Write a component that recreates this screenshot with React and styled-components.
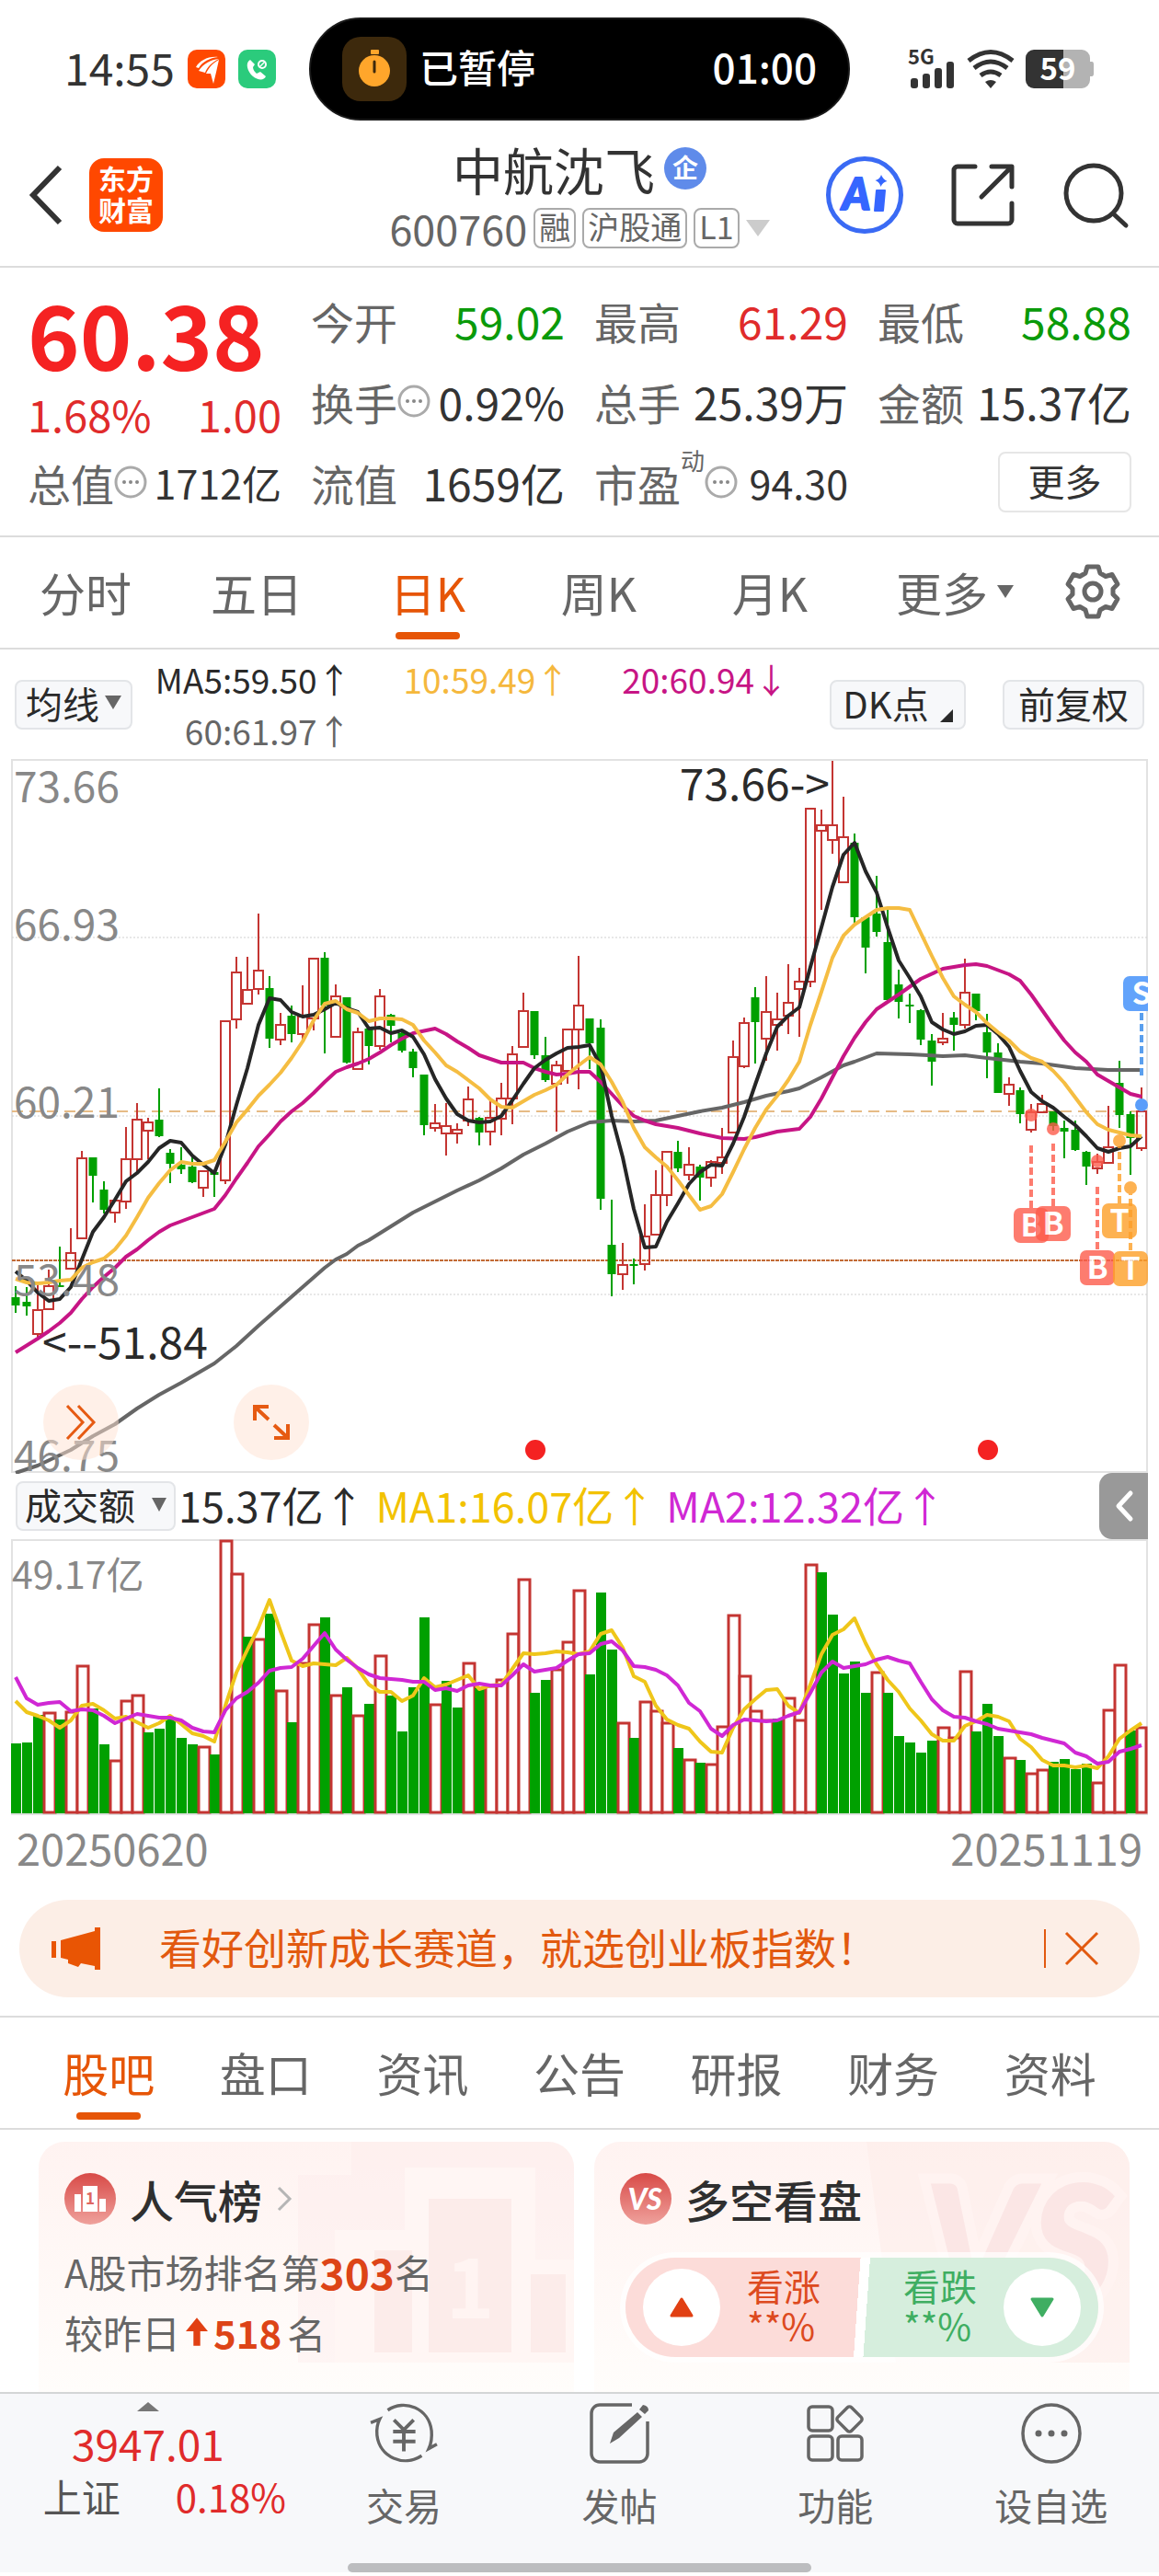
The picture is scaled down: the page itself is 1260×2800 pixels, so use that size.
import React from "react";
import styled, { createGlobalStyle } from "styled-components";

const GlobalStyle = createGlobalStyle`
  * {
    box-sizing: border-box;
  }

  body {
    margin: 0;
    background: #ffffff;
    color: #333333;
    font-family: "Noto Sans CJK SC", sans-serif;
    line-height: 1;
  }

  button {
    margin: 0;
    padding: 0;
    border: none;
    background: none;
    color: inherit;
    font: inherit;
    cursor: pointer;
  }

  a {
    color: inherit;
    text-decoration: none;
  }

  svg {
    display: block;
    flex-shrink: 0;
    overflow: visible;
  }
`;

/* ---------- status bar ---------- */

const StatusBar = styled.div`
  display: grid;
  grid-template-columns: 1fr auto 1fr;
  align-items: center;
  height: 150px;
  padding: 0 70px;
`;

const StatusLeft = styled.div`
  display: flex;
  align-items: center;
  gap: 14px;
`;

const Clock = styled.span`
  padding-bottom: 6px;
  font-size: 48px;
`;

const StatusRight = styled.div`
  display: flex;
  align-items: center;
  justify-content: flex-end;
  gap: 12px;
`;

const Island = styled.div`
  display: flex;
  align-items: center;
  width: 588px;
  height: 112px;
  padding: 0 34px;
  border: 2px solid #1a1a1a;
  border-radius: 56px;
  background: #000000;
  color: #ffffff;
  font-size: 42px;
  font-weight: 500;
`;

const IslandLabel = styled.span`
  flex: 1;
  margin-left: 14px;
  padding-bottom: 6px;
`;

const IslandTime = styled.span`
  padding-bottom: 6px;
  font-size: 44px;
`;

/* ---------- header ---------- */

const Header = styled.header`
  display: grid;
  grid-template-columns: 1fr auto 1fr;
  align-items: center;
  height: 141px;
  padding: 0 32px 16px;
  border-bottom: 2px solid #dcdcdc;
`;

const HeaderSide = styled.div`
  display: flex;
  align-items: center;
  justify-content: ${(props) => (props.$end ? "flex-end" : "flex-start")};
  gap: ${(props) => (props.$end ? "52px" : "28px")};
`;

const AppBadge = styled.a`
  display: flex;
  align-items: center;
  justify-content: center;
  width: 80px;
  height: 80px;
  padding-bottom: 4px;
  border-radius: 16px;
  background: #ff4800;
  color: #ffffff;
  font-size: 30px;
  font-weight: 700;
  line-height: 34px;
  text-align: center;
`;

const TitleBlock = styled.div`
  display: flex;
  flex-direction: column;
  align-items: center;
  gap: 12px;
`;

const StockName = styled.h1`
  display: flex;
  align-items: center;
  gap: 10px;
  margin: 0;
  font-size: 55px;
  font-weight: 400;
  line-height: 60px;
`;

const CompanyMark = styled.span`
  display: flex;
  align-items: center;
  justify-content: center;
  width: 46px;
  height: 46px;
  padding-bottom: 4px;
  border-radius: 50%;
  background: #5f8bea;
  color: #ffffff;
  font-size: 28px;
  font-weight: 700;
`;

const CodeRow = styled.div`
  display: flex;
  align-items: center;
  gap: 7px;
  color: #666666;
  font-size: 45px;
`;

const Tag = styled.span`
  height: 44px;
  padding: 0 4px;
  border: 2px solid #aaaaaa;
  border-radius: 8px;
  font-size: 34px;
  line-height: 36px;
`;

const Caret = styled.span`
  width: 0;
  height: 0;
  border-left: ${(props) => props.$size}px solid transparent;
  border-right: ${(props) => props.$size}px solid transparent;
  border-top: ${(props) => props.$drop}px solid ${(props) => props.$color || "#666666"};
`;

/* ---------- quote ---------- */

const Quote = styled.section`
  display: grid;
  grid-template-columns: repeat(4, 1fr);
  grid-auto-rows: 88px;
  column-gap: 32px;
  padding: 13px 30px 14px;
  border-bottom: 2px solid #dcdcdc;
`;

const PriceBlock = styled.div`
  grid-row: span 2;
  display: flex;
  flex-direction: column;
  color: #f52222;
`;

const Price = styled.strong`
  font-size: 96px;
  font-weight: 700;
  line-height: 116px;
  white-space: nowrap;
`;

const ChangeRow = styled.div`
  display: flex;
  justify-content: space-between;
  color: #e02b2b;
  font-size: 47px;
  line-height: 60px;
`;

const Cell = styled.div`
  display: flex;
  align-items: center;
  justify-content: space-between;
  white-space: nowrap;
`;

const CellLabel = styled.span`
  display: flex;
  align-items: center;
  color: #666666;
  font-size: 47px;
`;

const CellSup = styled.sup`
  align-self: flex-start;
  margin-top: -14px;
  font-size: 26px;
  line-height: 26px;
`;

const tones = { up: "#e02b2b", down: "#0a9a0a", flat: "#333333" };

const CellValue = styled.span`
  color: ${(props) => tones[props.$tone || "flat"]};
  font-size: ${(props) => (props.$tight ? 43 : 48)}px;
`;

const MoreCell = styled.div`
  display: flex;
  align-items: center;
  justify-content: flex-end;
`;

const MoreButton = styled.button`
  width: 145px;
  height: 66px;
  padding-bottom: 4px;
  border: 2px solid #e6e6e6;
  border-radius: 8px;
  font-size: 40px;
`;

/* ---------- tabs ---------- */

const PeriodTabs = styled.nav`
  display: grid;
  grid-template-columns: repeat(5, 186fr) 216fr 84fr;
  height: 122px;
  padding-right: 30px;
  border-bottom: 2px solid #dcdcdc;
`;

const InfoTabs = styled.nav`
  display: grid;
  grid-template-columns: repeat(7, 1fr);
  height: 124px;
  padding: 0 33px;
  border-top: 2px solid #dcdcdc;
  border-bottom: 2px solid #dcdcdc;
`;

const Tab = styled.button`
  position: relative;
  display: flex;
  align-items: center;
  justify-content: center;
  gap: 10px;
  padding-bottom: 2px;
  color: ${(props) => (props.$active ? "#e65507" : "#666666")};
  font-size: 50px;

  &::after {
    content: "";
    position: absolute;
    bottom: 9px;
    left: 50%;
    width: 70px;
    height: 8px;
    margin-left: -35px;
    border-radius: 4px;
    background: ${(props) => (props.$active ? "#e65507" : "transparent")};
  }
`;

/* ---------- chart bars ---------- */

const AverageBar = styled.div`
  display: flex;
  align-items: center;
  height: 119px;
  padding: 0 16px;
`;

const PillButton = styled.button`
  display: flex;
  align-items: center;
  justify-content: center;
  gap: ${(props) => props.$gap || 6}px;
  width: ${(props) => props.$width}px;
  height: 54px;
  padding-bottom: 4px;
  border: 2px solid #e3e5e8;
  border-radius: 8px;
  background: #f7f8fa;
  color: #2a2a2a;
  font-size: 40px;
  white-space: nowrap;
`;

const CornerMark = styled.span`
  align-self: flex-end;
  width: 0;
  height: 0;
  margin-bottom: 2px;
  border-left: 14px solid transparent;
  border-bottom: 14px solid #2a2a2a;
`;

const AverageList = styled.div`
  flex: 1;
  display: grid;
  grid-template-columns: repeat(3, 1fr);
  margin-right: 45px;
  font-size: 37px;
  line-height: 56px;
  text-align: right;
  white-space: nowrap;
`;

const Average = styled.span`
  color: ${(props) => props.$color};
`;

const ButtonGroup = styled.div`
  display: flex;
  gap: 40px;
`;

const ChartArea = styled.section`
  position: relative;
`;

const ChartSvg = styled.svg`
  width: 100%;
  height: auto;
`;

const RoundButton = styled.button`
  position: absolute;
  bottom: 14px;
  left: ${(props) => props.$left}px;
  display: flex;
  align-items: center;
  justify-content: center;
  width: 82px;
  height: 82px;
  border-radius: 50%;
  background: rgba(255, 226, 209, 0.5);
`;

const VolumeBar = styled.div`
  display: flex;
  align-items: center;
  height: 72px;
  padding: 0 12px 0 17px;
  font-size: 45px;
  white-space: nowrap;
`;

const VolumeValue = styled.span`
  margin-left: ${(props) => props.$gap}px;
  padding-bottom: 4px;
  color: ${(props) => props.$color};
`;

const CollapseButton = styled.button`
  display: flex;
  align-items: center;
  justify-content: center;
  width: 53px;
  height: 72px;
  margin-left: auto;
  border-radius: 14px 0 0 14px;
  background: #999999;
`;

const DateRow = styled.div`
  display: flex;
  justify-content: space-between;
  padding: 12px 18px 34px;
  color: #888888;
  font-size: 47px;
  line-height: 46px;
`;

/* ---------- banner ---------- */

const Banner = styled.aside`
  display: flex;
  align-items: center;
  height: 106px;
  margin: 0 21px 20px;
  padding: 0 44px 0 34px;
  border-radius: 53px;
  background: #fceee6;
  color: #e2590f;
  font-size: 46px;
`;

const BannerText = styled.a`
  flex: 1;
  margin-left: 62px;
  padding-bottom: 6px;
  white-space: nowrap;
`;

const BannerClose = styled.button`
  display: flex;
  align-items: center;
  height: 42px;
  padding-left: 20px;
  border-left: 2px solid #e2590f;
`;

/* ---------- cards ---------- */

const Cards = styled.section`
  display: grid;
  grid-template-columns: 1fr 1fr;
  gap: 22px;
  padding: 13px 32px 0 42px;
`;

const Card = styled.article`
  position: relative;
  height: 272px;
  padding: 34px 28px 0;
  border-radius: 28px 28px 0 0;
  background: linear-gradient(#fff3f1, #fffdfb);
  overflow: hidden;
`;

const CardArt = styled.svg`
  position: absolute;
  top: 0;
  right: 0;
`;

const CardBody = styled.div`
  position: relative;
`;

const CardTitle = styled.h2`
  display: flex;
  align-items: center;
  gap: 15px;
  margin: 0 0 18px;
  color: #2f2f2f;
  font-size: 48px;
  font-weight: 500;
  line-height: 56px;
`;

const CardLine = styled.p`
  display: flex;
  align-items: center;
  gap: ${(props) => props.$gap || 0}px;
  margin: 0;
  color: #666666;
  font-size: 42px;
  line-height: 66px;
`;

const Rank = styled.strong`
  color: #dd4417;
  font-size: ${(props) => (props.$large ? 46 : 42)}px;
  font-weight: 700;
`;

const VotePill = styled.div`
  display: flex;
  justify-content: space-between;
  height: 108px;
  margin: 36px 6px 0;
  padding: 0 19px;
  border-radius: 54px;
  background: linear-gradient(94deg, #fcdcd9 49%, #ffffff 49%, #ffffff 51%, #d6eedd 51%);
  box-shadow: 0 0 0 6px rgba(255, 255, 255, 0.7);
`;

const Vote = styled.button`
  display: flex;
  align-items: center;
  gap: 29px;
  color: ${(props) => props.$color};
  font-size: 40px;
  line-height: 43px;
  text-align: left;
`;

const VoteText = styled.span`
  padding-bottom: 4px;
`;

const VoteDisc = styled.span`
  display: flex;
  align-items: center;
  justify-content: center;
  width: 84px;
  height: 84px;
  border-radius: 50%;
  background: #ffffff;
`;

/* ---------- bottom bar ---------- */

const Footer = styled.footer`
  border-top: 2px solid #d4d6d6;
  background: #f7f8fa;
`;

const FooterNav = styled.nav`
  display: grid;
  grid-template-columns: 321fr repeat(4, 234fr);
  height: 184px;
`;

const IndexButton = styled.button`
  display: flex;
  flex-direction: column;
  align-items: center;
  padding-top: 9px;
  color: #e02b2b;
  font-size: 46px;
`;

const IndexValue = styled.span`
  margin-top: 4px;
  line-height: 60px;
`;

const IndexRow = styled.span`
  display: flex;
  gap: 60px;
  padding-left: 36px;
  font-size: 42px;
  line-height: 56px;
`;

const IndexName = styled.span`
  color: #555555;
`;

const FooterItem = styled.button`
  display: flex;
  flex-direction: column;
  align-items: center;
  padding-top: 9px;
  color: #666666;
  font-size: 41px;
  white-space: nowrap;
`;

const FooterIcon = styled.span`
  display: flex;
  align-items: center;
  height: 68px;
  margin-bottom: 23px;
`;

const HomeIndicator = styled.div`
  width: 504px;
  height: 10px;
  margin: 0 auto 4px;
  border-radius: 5px;
  background: #bcbdbf;
`;

/* ---------- chart data ---------- */

const x = (i) => 17 + i * 12;

// [body colour, high, body top, body bottom, low, volume colour, volume top]
const days = [
  ["g", 1397, 1409, 1418, 1426, "g", 1895], ["g", 1398, 1414, 1419, 1429, "g", 1894],
  ["r", 1395, 1423, 1449, 1453, "g", 1864], ["r", 1379, 1397, 1422, 1422, "r", 1861],
  ["g", 1354, 1396, 1398, 1398, "g", 1869], ["r", 1334, 1361, 1378, 1379, "r", 1860],
  ["r", 1250, 1258, 1345, 1345, "r", 1810], ["g", 1257, 1257, 1277, 1306, "g", 1857],
  ["g", 1283, 1292, 1314, 1318, "g", 1896], ["r", 1302, 1304, 1317, 1328, "r", 1913],
  ["r", 1224, 1259, 1305, 1313, "r", 1848], ["r", 1198, 1216, 1259, 1273, "r", 1842],
  ["r", 1214, 1219, 1228, 1259, "g", 1883], ["g", 1182, 1216, 1234, 1235, "g", 1879],
  ["g", 1248, 1252, 1264, 1285, "g", 1869], ["g", 1246, 1265, 1270, 1275, "g", 1889],
  ["g", 1255, 1267, 1284, 1285, "g", 1896], ["r", 1271, 1272, 1290, 1300, "r", 1898],
  ["g", 1272, 1273, 1276, 1300, "g", 1907], ["r", 1109, 1109, 1282, 1286, "r", 1674],
  ["r", 1039, 1056, 1107, 1117, "r", 1710], ["r", 1039, 1075, 1090, 1090, "g", 1779],
  ["r", 992, 1054, 1074, 1080, "r", 1781], ["g", 1060, 1073, 1128, 1138, "g", 1754],
  ["r", 1100, 1113, 1129, 1135, "r", 1837], ["g", 1092, 1103, 1123, 1132, "g", 1872],
  ["r", 1070, 1104, 1123, 1130, "r", 1807], ["r", 1041, 1041, 1106, 1119, "r", 1765],
  ["g", 1034, 1040, 1092, 1144, "g", 1758], ["r", 1069, 1082, 1126, 1126, "r", 1842],
  ["g", 1083, 1083, 1154, 1155, "g", 1834], ["r", 1116, 1121, 1161, 1161, "r", 1864],
  ["g", 1115, 1117, 1136, 1156, "g", 1852], ["r", 1074, 1082, 1136, 1140, "r", 1799],
  ["g", 1101, 1102, 1114, 1132, "g", 1843], ["g", 1121, 1122, 1141, 1143, "g", 1882],
  ["g", 1139, 1142, 1160, 1170, "g", 1834], ["g", 1167, 1167, 1222, 1233, "g", 1758],
  ["r", 1199, 1220, 1225, 1229, "r", 1852], ["r", 1198, 1223, 1231, 1255, "g", 1827],
  ["r", 1220, 1227, 1231, 1242, "g", 1856], ["r", 1180, 1194, 1217, 1223, "r", 1807],
  ["g", 1213, 1214, 1230, 1244, "g", 1835], ["r", 1195, 1214, 1229, 1244, "r", 1832],
  ["r", 1176, 1193, 1215, 1233, "r", 1825], ["r", 1136, 1145, 1193, 1221, "r", 1775],
  ["r", 1078, 1098, 1137, 1137, "r", 1716], ["g", 1098, 1098, 1146, 1150, "g", 1840],
  ["g", 1126, 1146, 1173, 1175, "g", 1826], ["r", 1152, 1157, 1177, 1229, "r", 1814],
  ["r", 1118, 1118, 1163, 1177, "r", 1784], ["r", 1038, 1092, 1118, 1183, "r", 1728],
  ["g", 1106, 1106, 1133, 1161, "g", 1820], ["g", 1107, 1116, 1302, 1314, "g", 1731],
  ["g", 1303, 1352, 1384, 1408, "g", 1793], ["r", 1350, 1374, 1384, 1401, "r", 1872],
  ["g", 1367, 1373, 1375, 1395, "g", 1889], ["r", 1308, 1343, 1373, 1380, "r", 1849],
  ["r", 1271, 1298, 1341, 1341, "r", 1859], ["r", 1251, 1251, 1298, 1310, "r", 1872],
  ["g", 1239, 1251, 1269, 1273, "g", 1900], ["r", 1246, 1265, 1276, 1282, "r", 1912],
  ["g", 1265, 1267, 1279, 1304, "g", 1916], ["r", 1260, 1262, 1279, 1289, "r", 1917],
  ["r", 1225, 1257, 1263, 1275, "r", 1876], ["r", 1130, 1148, 1230, 1230, "r", 1755],
  ["r", 1105, 1111, 1158, 1160, "r", 1821], ["g", 1072, 1083, 1110, 1155, "r", 1859],
  ["r", 1060, 1099, 1128, 1152, "r", 1869], ["r", 1078, 1107, 1113, 1141, "g", 1868],
  ["r", 1047, 1089, 1103, 1123, "r", 1845], ["r", 1051, 1066, 1074, 1126, "r", 1869],
  ["r", 878, 878, 1066, 1072, "r", 1700], ["r", 879, 896, 902, 988, "g", 1709],
  ["r", 826, 896, 912, 927, "g", 1755], ["r", 865, 909, 958, 958, "g", 1819],
  ["g", 905, 915, 996, 1002, "g", 1806], ["g", 996, 996, 1029, 1057, "g", 1840],
  ["g", 951, 992, 1012, 1017, "r", 1817], ["g", 988, 1023, 1086, 1088, "g", 1840],
  ["g", 1053, 1069, 1088, 1106, "g", 1887], ["g", 1079, 1091, 1093, 1111, "g", 1894],
  ["g", 1096, 1097, 1129, 1135, "g", 1905], ["g", 1123, 1130, 1153, 1179, "g", 1892],
  ["r", 1100, 1128, 1132, 1135, "r", 1877], ["g", 1099, 1105, 1113, 1141, "r", 1888],
  ["r", 1041, 1078, 1113, 1117, "r", 1816], ["g", 1079, 1079, 1098, 1108, "g", 1882],
  ["g", 1101, 1121, 1143, 1171, "g", 1852], ["g", 1133, 1143, 1187, 1187, "g", 1887],
  ["r", 1170, 1178, 1188, 1201, "r", 1910], ["g", 1181, 1184, 1210, 1220, "g", 1913],
  ["r", 1199, 1208, 1227, 1230, "r", 1927], ["r", 1189, 1199, 1208, 1208, "r", 1923],
  ["g", 1207, 1207, 1223, 1228, "g", 1915], ["g", 1217, 1225, 1229, 1258, "g", 1912],
  ["g", 1217, 1227, 1249, 1250, "g", 1923], ["g", 1250, 1251, 1267, 1287, "g", 1917],
  ["r", 1253, 1262, 1269, 1275, "r", 1937], ["r", 1201, 1246, 1263, 1263, "r", 1858],
  ["g", 1152, 1176, 1211, 1225, "r", 1809], ["g", 1207, 1210, 1236, 1276, "g", 1881],
  ["r", 1181, 1207, 1247, 1250, "r", 1877],
];

// a missing day is joined by the straight line between its neighbours
const ma5 = [
  1381, 1391, 1404, 1413, 1411, 1398, 1368, 1338, 1322, 1303, 1283, 1274, 1262, 1247, 1239, 1241, 1255, 1265,
  1274, 1243, 1200, 1160, 1113, 1084, 1086, 1099, 1104, 1102, 1096, 1089, 1095, 1099, 1117, 1116, 1122, 1119,
  1126, 1145, 1172, 1193, 1210, 1217, 1219, 1218, 1212, 1195, 1177, 1160, 1151, 1144, 1138, 1137, 1135, 1157,
  1212, 1257, 1313, 1355, 1354, 1327, 1307, 1286, 1273, 1265, 1266, 1242, 1213, 1178, 1144, 1115, 1103, 1094,
  1050, 1007, 963, 928, 915, 946, 969, 1007, 1043, 1062, 1082, 1110, 1118, 1123, 1120, 1114, 1113, 1123, 1137,
  1163, 1186, 1196, 1203, 1213, 1222, 1234, 1247, 1251, 1247, 1245, 1234,
];

const ma10 = [
  1389, 1393, 1394, 1393, 1391, 1390, 1377, 1371, 1367, 1357, 1342, 1322, 1301, 1285, 1271, 1262, 1264, 1264,
  1260, 1240, 1219, 1205, 1190, 1178, 1165, 1149, 1131, 1108, 1090, 1087, 1096, 1100, 1109, 1106, 1106, 1107,
  1113, 1130, 1143, 1157, 1164, 1173, 1182, 1194, 1202, 1203, 1196, 1189, 1184, 1178, 1167, 1157, 1148, 1156,
  1175, 1197, 1225, 1246, 1257, 1267, 1282, 1298, 1314, 1310, 1297, 1273, 1248, 1225, 1205, 1190, 1173, 1153,
  1113, 1077, 1040, 1016, 1004, 996, 988, 986, 986, 988, 1013, 1038, 1062, 1082, 1091, 1099, 1111, 1121, 1130,
  1142, 1149, 1153, 1163, 1176, 1192, 1208, 1221, 1227, 1230, 1233, 1234,
];

const ma20 = [
  1469, , 1454, 1446, 1437, 1426, 1411, 1398, 1387, 1377, 1365, 1357, 1347, 1338, 1331, , 1322, , 1313, 1298,
  1280, 1263, 1245, 1232, 1218, 1207, 1198, 1187, 1175, 1164, 1159, 1155, 1150, 1143, 1135, 1128, 1122, , 1117,
  1123, 1131, 1138, 1146, , 1154, , 1154, 1160, 1164, 1167, 1166, 1164, 1164, 1175, 1188, 1201, 1212, 1217,
  1221, , 1225, , 1231, , 1236, , 1237, 1235, , 1229, , 1226, 1213, 1193, 1170, 1147, 1127, 1110, 1096, , 1080,
  , 1063, , 1052, , 1048, 1047, 1049, , 1058, 1065, 1080, 1097, 1114, 1130, 1143, 1153, 1167, 1174, 1181, 1188,
  1191,
];

const ma60 = [
  1600, , 1592, , , 1575, , 1560, , 1547, , 1530, , 1515, , 1502, , , 1481, , 1462, , 1440, , 1419, , 1398, ,
  1377, 1368, 1362, 1353, 1347, , 1332, , 1317, , 1305, , 1293, , 1282, , 1269, , 1254, , 1242, , 1229, , 1219, ,
  1217, , 1218, , 1217, , 1212, , 1207, , 1203, , 1197, , 1190, , 1185, 1182, , 1170, , 1157, 1153, , 1144, , ,
  1145, , , 1147, , 1146, , 1149, , , 1153, , 1155, , , 1160, , , 1162, , , 1162,
];

const volMa1 = [
  1848, 1860, 1864, 1869, 1877, 1869, 1853, 1851, 1858, 1867, 1865, 1871, 1877, 1872, 1864, 1873, 1883, 1886,
  1892, 1853, 1817, 1792, 1768, 1738, 1772, 1804, 1810, 1807, 1808, 1809, 1801, 1813, 1830, 1838, 1838, 1848,
  1842, 1823, 1833, 1830, 1825, 1820, 1835, 1831, 1830, 1813, 1796, 1797, 1796, 1794, 1795, 1797, 1794, 1775,
  1771, 1790, 1821, 1827, 1853, 1868, 1874, 1878, 1892, 1903, 1904, 1877, 1857, 1846, 1836, 1835, 1853, 1861,
  1830, 1797, 1776, 1770, 1758, 1785, 1808, 1825, 1838, 1856, 1869, 1884, 1891, 1891, 1875, 1870, 1863, 1865,
  1870, 1889, 1898, 1912, 1918, 1918, 1920, 1918, 1921, 1908, 1889, 1880, 1872,
];

const volMa2 = [
  1822, 1845, 1852, 1850, 1849, 1859, 1857, 1858, 1864, 1872, 1867, 1862, 1864, 1866, 1866, 1869, 1877, 1881,
  1882, 1858, 1845, 1838, 1828, 1815, 1812, 1811, 1802, 1788, 1774, 1792, 1803, 1812, 1819, 1823, , 1825, 1827,
  1827, 1836, 1834, 1837, 1831, 1829, 1831, 1831, 1820, 1808, 1816, , 1812, 1804, 1797, 1796, 1786, 1783, 1793,
  1810, 1811, 1814, 1820, 1831, 1850, 1859, 1878, 1886, 1874, 1868, , 1870, 1869, 1864, 1860, 1839, 1817, 1805,
  1812, 1810, 1808, 1803, 1800, 1804, 1807, 1827, 1846, 1858, 1865, 1866, 1870, 1873, 1878, , 1882, 1884, 1888,
  , 1894, 1904, 1908, 1916, 1914, 1903, 1900, 1896,
];

const trades = [
  { day: 92, dot: 1211, from: 1244, top: 1312, label: "B", color: "#fd5c4c" },
  { day: 94, dot: 1226, from: 1242, top: 1310, label: "B", color: "#fd5c4c" },
  { day: 98, dot: 1261, from: 1289, top: 1358, label: "B", color: "#fd5c4c" },
  { day: 100, dot: 1239, from: 1239, top: 1307, label: "T", color: "#fd9f28" },
  { day: 101, dot: 1290, from: 1290, top: 1359, label: "T", color: "#fd9f28" },
];

const UP = "#c43532";
const DOWN = "#00a000";

function Line({ values, color, width = 4 }) {
  const points = [];
  values.forEach((y, i) => points.push(`${x(i)},${y}`));
  return <polyline points={points.join(" ")} fill="none" stroke={color} strokeWidth={width} strokeLinejoin="round" />;
}

function Candle({ day, i }) {
  const [kind, high, top, bottom, low] = day;
  const cx = x(i);
  if (kind === "g") {
    return (
      <g fill={DOWN}>
        <rect x={cx - 1} y={high} width="2" height={low - high} />
        <rect x={cx - 4.5} y={top} width="9" height={Math.max(bottom - top, 2)} />
      </g>
    );
  }
  return (
    <g stroke={UP} strokeWidth="2" fill="none">
      <path d={`M${cx} ${high}V${top}M${cx} ${bottom}V${low}`} />
      <rect x={cx - 5} y={top} width="10" height={Math.max(bottom - top, 2)} />
    </g>
  );
}

function TradeMark({ mark }) {
  const cx = x(mark.day);
  return (
    <g opacity="0.8">
      <circle cx={cx} cy={mark.dot} r="7" fill={mark.color} />
      <path d={`M${cx} ${mark.from}V${mark.top}`} stroke={mark.color} strokeWidth="4" strokeDasharray="8 4" />
      <rect x={cx - 19} y={mark.top} width="38" height="38" rx="7" fill={mark.color} />
      <text x={cx} y={mark.top + 31} fontSize="34" fontWeight="700" fill="#ffffff" textAnchor="middle">
        {mark.label}
      </text>
    </g>
  );
}

function PriceChart() {
  return (
    <ChartSvg viewBox="0 824 1260 776" role="img" aria-label="日K">
      <defs>
        <clipPath id="plot">
          <rect x="12" y="824" width="1236" height="777" />
        </clipPath>
      </defs>
      <rect x="13" y="825" width="1234" height="774" fill="none" stroke="#e2e2e2" strokeWidth="2" />
      <path d="M13 1018H1247M13 1212H1247M13 1406H1247" stroke="#d0d0d0" strokeWidth="1" strokeDasharray="2 2" />
      <path d="M13 1207H1247" stroke="#e6bb85" strokeWidth="2" strokeDasharray="12 7" />
      <path d="M13 1369H1247" stroke="#c26a35" strokeWidth="2" strokeDasharray="4 1" />
      {days.map((day, i) => (
        <Candle key={i} day={day} i={i} />
      ))}
      <g clipPath="url(#plot)">
        <Line values={ma60} color="#666666" />
        <Line values={ma20} color="#c71585" />
        <Line values={ma5} color="#262626" />
        <Line values={ma10} color="#f5bd42" />
        {trades.map((mark) => (
          <TradeMark key={mark.day} mark={mark} />
        ))}
        <circle cx="1241" cy="1200" r="7" fill="#5a9dfa" />
        <path d="M1241 1100V1168" stroke="#5a9fee" strokeWidth="4" strokeDasharray="8 4" />
        <rect x="1221" y="1060" width="39" height="38" rx="7" fill="#62a3fb" />
        <text x="1241" y="1091" fontSize="34" fontWeight="700" fill="#ffffff" textAnchor="middle">
          S
        </text>
      </g>
      <circle cx="582" cy="1575" r="11" fill="#f42222" />
      <circle cx="1074" cy="1575" r="11" fill="#f42222" />
      <g fontSize="46" fill="#888888">
        <text x="15" y="871">73.66</text>
        <text x="15" y="1021">66.93</text>
        <text x="15" y="1214">60.21</text>
        <text x="15" y="1407">53.48</text>
        <text x="15" y="1598">46.75</text>
      </g>
      <g fontSize="48" fill="#2a2a2a">
        <text x="902" y="869" textAnchor="end">73.66-&gt;</text>
        <text x="46" y="1476">&lt;--51.84</text>
      </g>
    </ChartSvg>
  );
}

function VolumeChart() {
  return (
    <ChartSvg viewBox="0 1672 1260 300" role="img" aria-label="成交额">
      <rect x="13" y="1673" width="1234" height="298" fill="none" stroke="#e2e2e2" strokeWidth="2" />
      {days.map((day, i) =>
        day[5] === "g" ? (
          <rect key={i} x={x(i) - 5} y={day[6] - 1} width="11" height={1971 - day[6]} fill={DOWN} />
        ) : (
          <rect
            key={i}
            x={x(i) - 5}
            y={day[6]}
            width={i === days.length - 1 ? 10 : 12}
            height={1969 - day[6]}
            fill="#ffffff"
            stroke={UP}
            strokeWidth="3"
          />
        )
      )}
      <Line values={volMa1} color="#efc61a" />
      <Line values={volMa2} color="#d028d4" />
      <text x="13" y="1726" fontSize="41" fill="#888888">
        49.17亿
      </text>
    </ChartSvg>
  );
}

/* ---------- icons ---------- */

const InfoIcon = () => (
  <svg width="36" height="36" viewBox="0 0 36 36">
    <circle cx="18" cy="18" r="16" fill="none" stroke="#aaaaaa" strokeWidth="3" />
    <g fill="#888888">
      <circle cx="11" cy="18" r="2" />
      <circle cx="18" cy="18" r="2" />
      <circle cx="25" cy="18" r="2" />
    </g>
  </svg>
);

const BackIcon = () => (
  <svg width="37" height="66" viewBox="0 0 37 66">
    <path d="M33 3L4 33l29 30" fill="none" stroke="#333333" strokeWidth="6" />
  </svg>
);

const AiIcon = () => (
  <svg width="84" height="84" viewBox="0 0 84 84">
    <circle cx="42" cy="42" r="39.5" fill="none" stroke="#3a6af4" strokeWidth="5" />
    <text
      x="33"
      y="58"
      fontFamily="Lato, sans-serif"
      fontSize="47"
      fontWeight="900"
      fontStyle="italic"
      fill="#3566ff"
      stroke="#3566ff"
      strokeWidth="2"
      strokeLinejoin="round"
      textAnchor="middle"
    >
      A
    </text>
    <path d="M55 37h9l-2 22h-9z" fill="#3566ff" stroke="#3566ff" strokeWidth="2" strokeLinejoin="round" />
    <path d="M60 20q2 5 6.500 7q-5 1-7 6q-1-5-6-7q5-1 6.500-6z" fill="#3566ff" />
  </svg>
);

const ShareIcon = () => (
  <svg width="70" height="70" viewBox="0 0 70 70" fill="none" stroke="#333333" strokeWidth="5" strokeLinecap="round" strokeLinejoin="round">
    <path d="M26 4H7a4 4 0 0 0-4 4v54a4 4 0 0 0 4 4h55a4 4 0 0 0 4-4V44" />
    <path d="M44 4h22v22M65 5L33 37" />
  </svg>
);

const SearchIcon = () => (
  <svg width="72" height="72" viewBox="0 0 72 72" fill="none" stroke="#333333" strokeWidth="5" strokeLinecap="round">
    <circle cx="33" cy="34" r="30" />
    <path d="M54 56l14 13" />
  </svg>
);

const GearIcon = () => (
  <svg width="62" height="62" viewBox="0 0 62 62" fill="none" stroke="#666666" strokeWidth="5" strokeLinejoin="round">
    <path d="M25 4h12l2 7 6 3.500 7-2 6 10.500-5 5v6l5 5-6 10.500-7-2-6 3.500-2 7H25l-2-7-6-3.500-7 2L4 39l5-5v-6l-5-5 6-10.500 7 2 6-3.500z" />
    <circle cx="31" cy="31" r="9" />
  </svg>
);

const TimerIcon = () => (
  <svg width="70" height="70" viewBox="0 0 70 70">
    <rect width="70" height="70" rx="20" fill="#3d290c" />
    <rect x="31" y="14" width="9" height="5" rx="1" fill="#ffa62b" />
    <circle cx="35" cy="37" r="17" fill="#ffa62b" />
    <path d="M35 27v11" stroke="#3d290c" strokeWidth="3" strokeLinecap="round" />
  </svg>
);

const FeatherAppIcon = () => (
  <svg width="41" height="42" viewBox="0 0 41 42">
    <rect width="41" height="42" rx="10" fill="#ff4800" />
    <path d="M9 19C13 12 22 7 33 8c-9 1-17 5-21 12zM12 23C17 15 25 11 34 10c-8 4-13 9-15 15zM20 26c3-7 8-12 14-15-2 9-4 18-6 26l-3-11z" fill="#ffffff" />
  </svg>
);

const PhoneAppIcon = () => (
  <svg width="41" height="42" viewBox="0 0 41 42">
    <rect width="41" height="42" rx="10" fill="#2bcb7c" />
    <path d="M13 11c-6 3-3 13 3 18 5 4 12 5 14 0l-6-5-4 2c-2-2-4-4-4-7l2-3z" fill="#ffffff" />
    <circle cx="26" cy="16" r="4" fill="none" stroke="#ffffff" strokeWidth="2" />
    <path d="M23 19l6-6" stroke="#ffffff" strokeWidth="1.5" />
  </svg>
);

const SignalIcon = () => (
  <svg width="52" height="44" viewBox="0 0 52 44" fill="#333333">
    <text x="0" y="17" fontSize="22" fontWeight="700">5G</text>
    <rect x="3" y="32" width="8" height="11" rx="3" />
    <rect x="16" y="27" width="8" height="16" rx="3" />
    <rect x="29" y="21" width="8" height="22" rx="3" />
    <rect x="42" y="14" width="8" height="29" rx="3" />
  </svg>
);

const WifiIcon = () => (
  <svg width="52" height="42" viewBox="0 0 52 42" fill="none" stroke="#333333" strokeWidth="5">
    <path d="M2 12q24-19 48 0" />
    <path d="M8 20q18-14 36 0" />
    <path d="M15 28q11-8 22 0" />
    <path d="M20 35q6-4 12 0l-6 7z" fill="#333333" stroke="none" />
  </svg>
);

const BatteryIcon = () => (
  <svg width="75" height="42" viewBox="0 0 75 42">
    <path d="M41 0h20a9 9 0 0 1 9 9v4h2q2 0 2 3v10q0 3-2 3h-2v4a9 9 0 0 1-9 9H41z" fill="#b3b3b3" />
    <path d="M9 0h32v42H9a9 9 0 0 1-9-9V9a9 9 0 0 1 9-9z" fill="#333333" />
    <text x="35" y="33" fontSize="33" fontWeight="700" fill="#ffffff" textAnchor="middle">59</text>
  </svg>
);

const ForwardIcon = () => (
  <svg width="34" height="38" viewBox="0 0 34 38" fill="none" stroke="#e65a12" strokeWidth="3">
    <path d="M2 1l17 18L2 37M14 1l17 18-17 18" />
  </svg>
);

const ExpandIcon = () => (
  <svg width="40" height="40" viewBox="0 0 40 40" fill="none" stroke="#e65a12" strokeWidth="4">
    <path d="M2 18V3h15M3 4l14 13M38 22v15H23M37 36L23 23" />
  </svg>
);

const HornIcon = () => (
  <svg width="56" height="48" viewBox="0 0 56 48" fill="#e95504">
    <rect x="1" y="16" width="5" height="18" />
    <path d="M11 15L48 5V1h6v46h-6v-4l-15-3-3 4-11-4v-4l-8-2z" />
  </svg>
);

const CloseIcon = () => (
  <svg width="38" height="38" viewBox="0 0 38 38">
    <path d="M2 2l34 34M36 2L2 36" stroke="#e2590f" strokeWidth="3" />
  </svg>
);

const PodiumIcon = () => (
  <svg width="56" height="56" viewBox="0 0 56 56">
    <defs>
      <linearGradient id="disc" x2="0" y2="1">
        <stop offset="0" stopColor="#d84a47" />
        <stop offset="1" stopColor="#efa19c" />
      </linearGradient>
    </defs>
    <circle cx="28" cy="28" r="28" fill="url(#disc)" />
    <path d="M11 23h7v19h-7zM20 14h16v28H20zM38 28h7v14h-7z" fill="#ffffff" />
    <text x="28" y="34" fontSize="17" fontWeight="700" fill="#de6662" textAnchor="middle">1</text>
  </svg>
);

const VersusIcon = () => (
  <svg width="56" height="56" viewBox="0 0 56 56">
    <circle cx="28" cy="28" r="28" fill="url(#disc)" />
    <text x="27" y="40" fontFamily="Lato, sans-serif" fontSize="32" fontWeight="900" fontStyle="italic" fill="#ffffff" textAnchor="middle">
      VS
    </text>
  </svg>
);

const TradeIcon = () => (
  <svg width="78" height="68" viewBox="0 0 78 70" fill="none" stroke="#666666" strokeWidth="3.5">
    <path d="M21 9C40-4 67 7 70 32q1 11-3 20l9-5" />
    <path d="M59 60C39 73 12 62 9 37Q8 27 12 19l-10 4" />
    <path d="M28 20l11 11 11-11M39 31v24M27 33h25M27 44h25" strokeWidth="4" />
  </svg>
);

const PostIcon = () => (
  <svg width="66" height="66" viewBox="0 0 66 66" fill="none" stroke="#666666" strokeWidth="3.5">
    <path d="M46 2H11a9 9 0 0 0-9 9v44a9 9 0 0 0 9 9h43a9 9 0 0 0 9-9V20" />
    <path d="M22 44l4-12L52 10l5 5-25 23zM54 7l4-5q6 1 6 6l-4 4z" fill="#666666" stroke="none" />
  </svg>
);

const GridIcon = () => (
  <svg width="64" height="66" viewBox="0 0 64 66" fill="none" stroke="#666666" strokeWidth="3.5">
    <rect x="3" y="4" width="26" height="26" rx="4" />
    <rect x="3" y="36" width="26" height="26" rx="4" />
    <rect x="35" y="36" width="26" height="26" rx="4" />
    <rect x="37" y="7" width="21" height="21" rx="3" transform="rotate(45 47.5 17.5)" />
  </svg>
);

const DotsIcon = () => (
  <svg width="66" height="66" viewBox="0 0 66 66">
    <circle cx="33" cy="33" r="31" fill="none" stroke="#666666" strokeWidth="3.5" />
    <g fill="#666666">
      <circle cx="19" cy="33" r="3.5" />
      <circle cx="33" cy="33" r="3.5" />
      <circle cx="47" cy="33" r="3.5" />
    </g>
  </svg>
);

const quoteCells = [
  { label: "今开", value: "59.02", tone: "down" },
  { label: "最高", value: "61.29", tone: "up" },
  { label: "最低", value: "58.88", tone: "down" },
  { label: "换手", value: "0.92%", info: true },
  { label: "总手", value: "25.39万" },
  { label: "金额", value: "15.37亿" },
  { label: "总值", value: "1712亿", info: true, tight: true },
  { label: "流值", value: "1659亿" },
  { label: "市盈", sup: "动", value: "94.30", info: true, tight: true },
];

const footerItems = [
  { label: "交易", icon: <TradeIcon /> },
  { label: "发帖", icon: <PostIcon /> },
  { label: "功能", icon: <GridIcon /> },
  { label: "设自选", icon: <DotsIcon /> },
];

const App = () => {
  return (
    <>
      <GlobalStyle />
      <StatusBar>
        <StatusLeft>
          <Clock>14:55</Clock>
          <FeatherAppIcon />
          <PhoneAppIcon />
        </StatusLeft>
        <Island>
          <TimerIcon />
          <IslandLabel>已暂停</IslandLabel>
          <IslandTime>01:00</IslandTime>
        </Island>
        <StatusRight>
          <SignalIcon />
          <WifiIcon />
          <BatteryIcon />
        </StatusRight>
      </StatusBar>

      <Header>
        <HeaderSide>
          <button aria-label="返回">
            <BackIcon />
          </button>
          <AppBadge href="#home">
            东方
            <br />
            财富
          </AppBadge>
        </HeaderSide>
        <TitleBlock>
          <StockName>
            中航沈飞<CompanyMark>企</CompanyMark>
          </StockName>
          <CodeRow>
            <span>600760</span>
            <Tag>融</Tag>
            <Tag>沪股通</Tag>
            <Tag>L1</Tag>
            <Caret $size={13} $drop={18} $color="#cccccc" />
          </CodeRow>
        </TitleBlock>
        <HeaderSide $end>
          <button aria-label="AI">
            <AiIcon />
          </button>
          <button aria-label="分享">
            <ShareIcon />
          </button>
          <button aria-label="搜索">
            <SearchIcon />
          </button>
        </HeaderSide>
      </Header>

      <Quote>
        <PriceBlock>
          <Price>60.38</Price>
          <ChangeRow>
            <span>1.68%</span>
            <span>1.00</span>
          </ChangeRow>
        </PriceBlock>
        {quoteCells.map((cell) => (
          <Cell key={cell.label}>
            <CellLabel>
              {cell.label}
              {cell.sup && <CellSup>{cell.sup}</CellSup>}
              {cell.info && <InfoIcon />}
            </CellLabel>
            <CellValue $tone={cell.tone} $tight={cell.tight}>
              {cell.value}
            </CellValue>
          </Cell>
        ))}
        <MoreCell>
          <MoreButton>更多</MoreButton>
        </MoreCell>
      </Quote>

      <PeriodTabs>
        <Tab>分时</Tab>
        <Tab>五日</Tab>
        <Tab $active>日K</Tab>
        <Tab>周K</Tab>
        <Tab>月K</Tab>
        <Tab>
          更多
          <Caret $size={9} $drop={14} />
        </Tab>
        <Tab aria-label="设置">
          <GearIcon />
        </Tab>
      </PeriodTabs>

      <AverageBar>
        <PillButton $width={128}>
          均线
          <Caret $size={9} $drop={15} />
        </PillButton>
        <AverageList>
          <Average $color="#2a2a2a">MA5:59.50↑</Average>
          <Average $color="#f5b83d">10:59.49↑</Average>
          <Average $color="#c71585">20:60.94↓</Average>
          <Average $color="#666666">60:61.97↑</Average>
        </AverageList>
        <ButtonGroup>
          <PillButton $width={148} $gap={12}>
            DK点
            <CornerMark />
          </PillButton>
          <PillButton $width={154}>前复权</PillButton>
        </ButtonGroup>
      </AverageBar>

      <ChartArea>
        <PriceChart />
        <RoundButton $left={47} aria-label="展开">
          <ForwardIcon />
        </RoundButton>
        <RoundButton $left={254} aria-label="全屏">
          <ExpandIcon />
        </RoundButton>
      </ChartArea>

      <VolumeBar>
        <PillButton $width={174} $gap={18}>
          成交额
          <Caret $size={8} $drop={15} />
        </PillButton>
        <VolumeValue $gap={3} $color="#2a2a2a">15.37亿↑</VolumeValue>
        <VolumeValue $gap={12} $color="#f2c200">MA1:16.07亿↑</VolumeValue>
        <VolumeValue $gap={12} $color="#d028d4">MA2:12.32亿↑</VolumeValue>
        <CollapseButton aria-label="收起">
          <svg width="20" height="34" viewBox="0 0 20 34">
            <path d="M17 3L4 17l13 14" fill="none" stroke="#ffffff" strokeWidth="5" strokeLinecap="round" strokeLinejoin="round" />
          </svg>
        </CollapseButton>
      </VolumeBar>
      <VolumeChart />
      <DateRow>
        <span>20250620</span>
        <span>20251119</span>
      </DateRow>

      <Banner>
        <HornIcon />
        <BannerText href="#index">看好创新成长赛道，就选创业板指数！</BannerText>
        <BannerClose aria-label="关闭">
          <CloseIcon />
        </BannerClose>
      </Banner>

      <InfoTabs>
        <Tab $active>股吧</Tab>
        <Tab>盘口</Tab>
        <Tab>资讯</Tab>
        <Tab>公告</Tab>
        <Tab>研报</Tab>
        <Tab>财务</Tab>
        <Tab>资料</Tab>
      </InfoTabs>

      <Cards>
        <Card>
          <CardArt width="300" height="272" viewBox="0 0 300 272">
            <path d="M58 0h242v240H0V36h58z" fill="#fdecea" opacity="0.4" />
            <path d="M116 28h142v100h42v112H40V96h76z" fill="#fff6f4" />
            <path d="M142 62h90v167h-90zM83 118h41v111H83zM253 144h38v85h-38z" fill="#fbe8e6" opacity="0.7" />
            <text x="187" y="192" fontSize="90" fontWeight="700" fill="#fff4f2" textAnchor="middle">
              1
            </text>
          </CardArt>
          <CardBody>
            <CardTitle>
              <PodiumIcon />
              人气榜
              <svg width="18" height="28" viewBox="0 0 18 28">
                <path d="M3 2l12 12L3 26" fill="none" stroke="#b5b5b5" strokeWidth="3" />
              </svg>
            </CardTitle>
            <CardLine>
              <span>A股市场排名第</span>
              <Rank $large>303</Rank>
              <span>名</span>
            </CardLine>
            <CardLine $gap={6}>
              <span>较昨日</span>
              <svg width="24" height="34" viewBox="0 0 26 34">
                <path d="M13 0l13 16h-9v17H9V16H0z" fill="#e14013" />
              </svg>
              <Rank>518</Rank>
              <span>名</span>
            </CardLine>
          </CardBody>
        </Card>
        <Card>
          <CardArt width="300" height="272" viewBox="0 0 300 272">
            <path d="M14 0h286v240H46z" fill="#fdecea" opacity="0.6" />
            <text
              x="180"
              y="176"
              fontFamily="Lato, sans-serif"
              fontSize="180"
              fontWeight="900"
              fontStyle="italic"
              fill="#fbe6e5"
              stroke="#fff3f1"
              strokeWidth="22"
              paintOrder="stroke"
              textAnchor="middle"
            >
              VS
            </text>
          </CardArt>
          <CardBody>
            <CardTitle>
              <VersusIcon />
              多空看盘
            </CardTitle>
            <VotePill>
              <Vote $color="#dd4a20">
                <VoteDisc>
                  <svg width="28" height="22" viewBox="0 0 28 22">
                    <path d="M14 2l11 18H3z" fill="#e14013" stroke="#e14013" strokeWidth="3" strokeLinejoin="round" />
                  </svg>
                </VoteDisc>
                <VoteText>
                  看涨
                  <br />
                  **%
                </VoteText>
              </Vote>
              <Vote $color="#3fae62">
                <VoteText>
                  看跌
                  <br />
                  **%
                </VoteText>
                <VoteDisc>
                  <svg width="28" height="22" viewBox="0 0 28 22">
                    <path d="M14 20L3 2h22z" fill="#3fae62" stroke="#3fae62" strokeWidth="3" strokeLinejoin="round" />
                  </svg>
                </VoteDisc>
              </Vote>
            </VotePill>
          </CardBody>
        </Card>
      </Cards>

      <Footer>
        <FooterNav>
          <IndexButton>
            <svg width="24" height="10" viewBox="0 0 24 10">
              <path d="M12 0l12 10H0z" fill="#777777" />
            </svg>
            <IndexValue>3947.01</IndexValue>
            <IndexRow>
              <IndexName>上证</IndexName>
              <span>0.18%</span>
            </IndexRow>
          </IndexButton>
          {footerItems.map((item) => (
            <FooterItem key={item.label}>
              <FooterIcon>{item.icon}</FooterIcon>
              {item.label}
            </FooterItem>
          ))}
        </FooterNav>
        <HomeIndicator />
      </Footer>
    </>
  );
};

export default App;
